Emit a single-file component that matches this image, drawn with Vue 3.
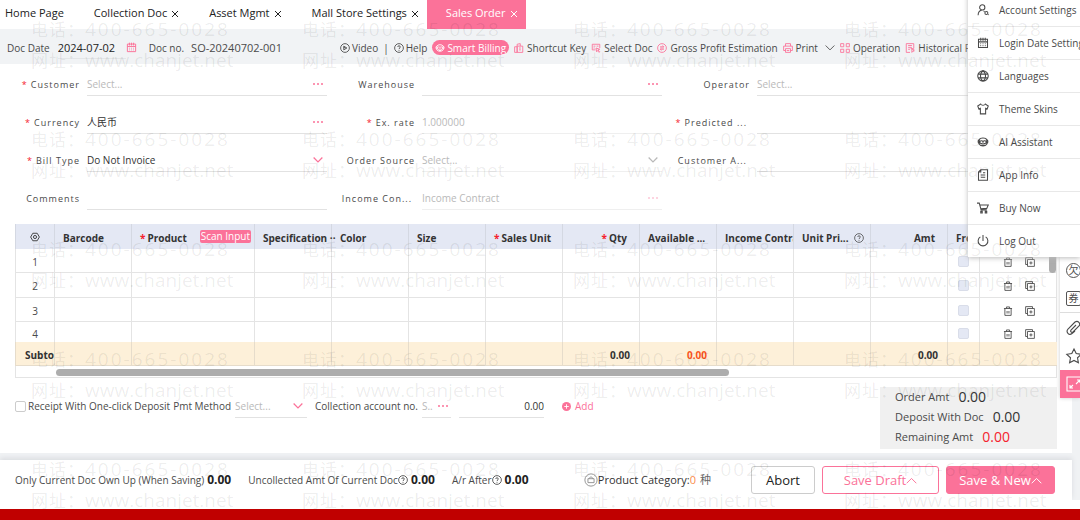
<script setup>
import { h, ref } from 'vue'

// 16x16 line icons, drawn with the current text colour
const icons = {
  calendar: 'M2 3h12v11H2zM2 6.5h12M5 1v4M8 1v4M11 1v4M4.5 9h1M7.5 9h1M10.5 9h1M4.5 11.5h1M7.5 11.5h1M10.5 11.5h1',
  play: 'M8 1a7 7 0 1 0 0 14A7 7 0 0 0 8 1zM6 5v6l5-3zM6 7l3 1',
  help: 'M8 1a7 7 0 1 0 0 14A7 7 0 0 0 8 1zM6 6.4c0-2.8 4-2.8 4 0C10 8 8 8 8 9.8M8 11.2v1.2',
  robot: 'M3 5c1-3 9-3 10 0M3 5c-2 0-2 5 0 5M13 5c2 0 2 5 0 5M3 5v6c2 3 8 3 10 0V5M4 7c1-1 3-1 4 .5C9 6 11 6 12 7v2c-1 2-3 1-4 0-1 1-3 2-4 0zM6 12h4',
  shortcut: 'M1 6h4v9H1zM5 15V2l5-1v4M5 5h9v10H5M8 8h3M8 11h3',
  pick: 'M14 8V2H2v9h5M4 5h3M4 8h2M9 5h3M8 8l6 2-3 1 3 3-1 1-3-3-1 2z',
  coin: 'M8 1a7 7 0 1 0 0 14A7 7 0 0 0 8 1zM5 6h6l-2-2M11 10H5l2 2M5 8h6',
  print: 'M4 5V1h8v4M4 12H1V5h14v7h-3M4 9h8v6H4zM6 12h4',
  grid: 'M1 1h5v5H1zM10 1h5v5h-5zM1 10h5v5H1zM10 10h5v5h-5z',
  history: 'M14 8V1H2v14h6M5 4h6M5 7h6M5 10h3M11 9v6l3-3zM9 9h5v5',
  chevron: 'M1 4l7 7 7-7',
  up: 'M1 12l7-7 7 7',
  user: 'M7 1a3.3 3.3 0 1 0 0 7 3.3 3.3 0 0 0 0-7zM1.500 15c0-4 2-6.500 5.500-7M12.500 10a2 2 0 1 0 0 4 2 2 0 0 0 0-4zM10 10.500l-1-.8M15 14l.7.6',
  globe: 'M8 1a7 7 0 1 0 0 14A7 7 0 0 0 8 1zM8 1c-4.500 3-4.500 11 0 14 4.500-3 4.500-11 0-14M1.500 5.500h13M1.500 10.500h13',
  shirt: 'M5 1.500c1 2 5 2 6 0l4 2.500-1.500 4-2-.8V14.500h-7V7.200l-2 .8L1 4z',
  paper: 'M5 1h9v14H2V4zM5 1v3H2M8 5h3M5 8h6M5 11h6',
  cart: 'M0 1.500h3l2.500 9H13M3.500 4H15l-2 4.500L5 9M5 12.500h2v2H5zM11 12.500h2v2h-2z',
  power: 'M8 0v8M4.500 2.500a6.500 6.500 0 1 0 7 0',
  gear: 'M4.500 2h7L15 8l-3.500 6h-7L1 8zM8 5.500a2.500 2.500 0 1 0 0 5 2.500 2.500 0 0 0 0-5z',
  trash: 'M1.500 4h13M5.500 4V1.500h5V4M3 4v11h10V4M6.500 8v4M9.500 8v4',
  copy: 'M4 4h11v11H4zM4 12H1V1h11v3M9.500 7v5M7 9.500h5',
  clip: 'M10 5L5 10c-1 1.500.5 3 2 2l6-6c2-2.500-1-6-4-4L2 9c-2.500 3 1 7 4 4.500L9 11',
  star: 'M8 1l2.200 4.600 5 .7-3.700 3.500.9 5L8 12.400l-4.400 2.400.9-5L.8 6.300l5-.7z',
  expand: 'M1 1h16v14H1zM11 4h3v3M14 4l-4 4M7 12H4V9M4 12l3-3',
  bag: 'M8 1a7 7 0 1 0 0 14A7 7 0 0 0 8 1zM4.500 6.500h7V11h-7zM6 6.500C6 4 10 4 10 6.500',
}

const Icon = (props) => h(
  'svg',
  { class: 'icon', viewBox: '0 0 16 16', 'aria-hidden': 'true' },
  [h('path', { d: icons[props.name] })],
)
Icon.props = ['name']

const tabs = [
  { name: 'Home Page' },
  { name: 'Collection Doc', closable: true },
  { name: 'Asset Mgmt', closable: true },
  { name: 'Mall Store Settings', closable: true },
  { name: 'Sales Order', closable: true, active: true },
]

const fields = [
  { id: 'customer', label: 'Customer', required: true, hint: 'Select...', end: 'dots' },
  { id: 'warehouse', label: 'Warehouse', end: 'dots' },
  { id: 'operator', label: 'Operator', hint: 'Select...' },
  { id: 'currency', label: 'Currency', required: true, value: '人民币', end: 'dots' },
  { id: 'rate', label: 'Ex. rate', required: true, hint: '1.000000', faint: true },
  { id: 'predicted', label: 'Predicted ...', required: true, cut: true },
  { id: 'bill', label: 'Bill Type', required: true, options: ['Do Not Invoice'], end: 'chevron' },
  { id: 'source', label: 'Order Source', options: ['Select...'], end: 'chevron', faint: true },
  { id: 'area', label: 'Customer A...', cut: true },
  { id: 'comments', label: 'Comments' },
  { id: 'contract', label: 'Income Con...', hint: 'Income Contract', end: 'dots', faint: true, cut: true },
]

const columns = [
  { key: 'barcode', label: 'Barcode' },
  { key: 'product', label: 'Product', required: true, scan: true },
  { key: 'spec', label: 'Specification ··', spill: true },
  { key: 'color', label: 'Color' },
  { key: 'size', label: 'Size' },
  { key: 'unit', label: 'Sales Unit', required: true },
  { key: 'qty', label: 'Qty', required: true, right: true, total: '0.00' },
  { key: 'available', label: 'Available ...', total: '0.00', warn: true },
  { key: 'income', label: 'Income Contract' },
  { key: 'price', label: 'Unit Pri...', help: true },
  { key: 'amt', label: 'Amt', right: true, total: '0.00' },
]

const menu = [
  { icon: 'user', label: 'Account Settings' },
  { icon: 'calendar', label: 'Login Date Settings' },
  { icon: 'globe', label: 'Languages' },
  { icon: 'shirt', label: 'Theme Skins' },
  { icon: 'robot', label: 'AI Assistant' },
  { icon: 'paper', label: 'App Info' },
  { icon: 'cart', label: 'Buy Now' },
  { icon: 'power', label: 'Log Out' },
]

const docDate = ref('2024-07-02')
const deposit = ref(false)
</script>

<template>
  <div class="app">
    <nav class="tabs">
      <button v-for="t in tabs" :key="t.name" class="tab" :class="{ 'tab--active': t.active }">
        {{ t.name }}
        <svg v-if="t.closable" class="close" viewBox="0 0 8 8"><path d="M1 1l6 6M7 1l-6 6" /></svg>
      </button>
    </nav>

    <header class="toolbar">
      <div class="doc">
        <label for="date">Doc Date</label>
        <input id="date" v-model="docDate" class="date">
        <Icon name="calendar" class="pink doc-cal" />
        <span>Doc no.</span>
        <span class="doc-no">SO-20240702-001</span>
      </div>
      <div class="actions">
        <button><Icon name="play" />Video</button>
        <span>|</span>
        <button><Icon name="help" />Help</button>
        <button class="smart"><Icon name="robot" />Smart Billing</button>
        <button><Icon name="shortcut" class="pink" />Shortcut Key</button>
        <button><Icon name="pick" class="pink" />Select Doc</button>
        <button><Icon name="coin" class="pink" />Gross Profit Estimation</button>
        <button><Icon name="print" class="pink" />Print<Icon name="chevron" class="print-more" /></button>
        <button><Icon name="grid" class="pink" />Operation</button>
        <button><Icon name="history" class="pink" />Historical Foot</button>
      </div>
    </header>

    <main class="main">
      <form class="form" @submit.prevent>
        <div v-for="f in fields" :key="f.id" class="field" :class="{ 'field--faint': f.faint }">
          <label :for="f.id" :class="{ cut: f.cut }"><i v-if="f.required" class="req">*</i>{{ f.label }}</label>
          <div class="box">
            <select v-if="f.options" :id="f.id">
              <option v-for="o in f.options" :key="o">{{ o }}</option>
            </select>
            <input v-else :id="f.id" :value="f.value" :placeholder="f.hint">
            <button v-if="f.end === 'dots'" type="button" class="dots" :aria-label="`Choose ${f.label}`"><i /><i /><i /></button>
            <Icon v-if="f.end === 'chevron'" name="chevron" class="arrow" />
          </div>
        </div>
      </form>

      <div class="sheet">
        <table class="lines">
          <colgroup>
            <col class="w-no">
            <col v-for="c in columns" :key="c.key" :class="c.scan ? 'w-product' : 'w-cell'">
            <col class="w-free">
            <col class="w-ops">
          </colgroup>
          <thead>
            <tr>
              <th class="center"><Icon name="gear" /></th>
              <th v-for="c in columns" :key="c.key" :class="{ right: c.right, spill: c.spill }">
                <div class="head">
                  <i v-if="c.required" class="req">*</i><span>{{ c.label }}</span>
                  <button v-if="c.scan" class="scan">Scan Input</button>
                  <Icon v-if="c.help" name="help" class="head-help" />
                </div>
              </th>
              <th>Free</th>
              <th />
            </tr>
          </thead>
          <tbody>
            <tr v-for="n in 4" :key="n">
              <td class="center">{{ n }}</td>
              <td v-for="c in columns" :key="c.key" />
              <td class="center"><input type="checkbox" class="tick tick--off" :aria-label="`Free gift, line ${n}`" disabled></td>
              <td>
                <div class="ops-row">
                  <button aria-label="Delete line"><Icon name="trash" /></button>
                  <button aria-label="Copy line"><Icon name="copy" /></button>
                </div>
              </td>
            </tr>
          </tbody>
          <tfoot>
            <tr>
              <td class="subtotal">Subtotal</td>
              <td v-for="c in columns" :key="c.key" class="sum" :class="{ warn: c.warn }">{{ c.total }}</td>
              <td />
              <td />
            </tr>
          </tfoot>
        </table>
        <div class="scroll-x"><div class="thumb" /></div>
        <div class="thumb-y" />
      </div>

      <div class="below">
        <div class="deposit">
          <label class="one-click"><input v-model="deposit" type="checkbox" class="tick">Receipt With One-click Deposit</label>
          <label for="pmt" class="pmt">Pmt Method</label>
          <div class="box pmt-box">
            <select id="pmt" class="hint"><option>Select...</option></select>
            <Icon name="chevron" class="arrow" />
          </div>
          <label for="account" class="account">Collection account no.</label>
          <div class="box account-box">
            <input id="account" placeholder="S..">
            <button class="dots" aria-label="Choose account"><i /><i /><i /></button>
          </div>
          <div class="box amount-box"><input value="0.00" aria-label="Deposit amount"></div>
          <button class="add">
            <svg class="add-icon" viewBox="0 0 10 10"><circle cx="5" cy="5" r="5" /><path d="M5 2.500v5M2.500 5h5" /></svg>Add
          </button>
        </div>
        <div class="summary">
          <p>Order Amt<b>0.00</b></p>
          <p>Deposit With Doc<b>0.00</b></p>
          <p>Remaining Amt<b class="red">0.00</b></p>
        </div>
      </div>
    </main>

    <footer class="footer">
      <div class="stat">Only Current Doc Own Up (When Saving)<b>0.00</b></div>
      <div class="stat">Uncollected Amt Of Current Doc<Icon name="help" /><b>0.00</b></div>
      <div class="stat">A/r After<Icon name="help" /><b>0.00</b></div>
      <div class="category"><Icon name="bag" class="bag" />Product Category:<em>0</em><span>种</span></div>
      <div class="buttons">
        <button class="btn">Abort</button>
        <button class="btn btn--line">Save Draft<Icon name="up" /></button>
        <button class="btn btn--fill">Save &amp; New<Icon name="up" /></button>
      </div>
    </footer>
    <div class="strip" />

    <aside class="rail">
      <button aria-label="Arrears"><span class="glyph glyph--round">欠</span></button>
      <button aria-label="Coupons"><span class="glyph">券</span></button>
      <button aria-label="Attachments" class="rail-split"><Icon name="clip" /></button>
      <button aria-label="Favourites"><Icon name="star" /></button>
      <button aria-label="Full screen" class="rail-full"><Icon name="expand" /></button>
    </aside>

    <div class="menu">
      <button v-for="m in menu" :key="m.label"><Icon :name="m.icon" />{{ m.label }}</button>
    </div>

    <div class="watermark" aria-hidden="true">
      <div v-for="n in 20" :key="n">
        <div class="mark-tel"><span>电话：</span>400-665-0028</div>
        <div><span>网址：</span>www.chanjet.net</div>
      </div>
    </div>
  </div>
</template>

<style>
body {
  margin: 0;
  background: #fff;
}
</style>

<style scoped>
.app {
  position: relative;
  overflow: hidden;
  background: #f0f2f4;
  color: #4a4a4a;
  font: 10px/16px "Open Sans", "Noto Sans CJK SC", sans-serif;
}
.app * {
  box-sizing: border-box;
}
button,
input,
select {
  margin: 0;
  padding: 0;
  border: none;
  border-radius: 0;
  background: none;
  color: inherit;
  font: inherit;
  outline: none;
  appearance: none;
}
input,
select {
  min-width: 0;
}
button {
  white-space: nowrap;
}
.icon {
  width: 11px;
  height: 11px;
  flex: none;
  fill: none;
  stroke: currentColor;
  stroke-width: 1.4;
  overflow: visible;
}
.pink {
  color: #fb7299;
}
.req {
  color: #f5222d;
  font-style: normal;
}

/* tabs */
.tabs {
  display: flex;
  height: 29px;
  padding-left: 5px;
  gap: 30px;
  background: #fff;
  color: #222;
  font-size: 11px;
}
.tab {
  display: flex;
  align-items: center;
  gap: 4px;
  padding-bottom: 3px;
}
.tab--active {
  margin-left: -22px;
  padding: 0 8px 3px 19px;
  background: #fb7299;
  color: #fff;
}
.close {
  width: 8px;
  height: 8px;
  margin-top: 2px;
  fill: none;
  stroke: currentColor;
}

/* toolbar */
.toolbar {
  display: flex;
  align-items: center;
  height: 35px;
  padding: 2px 0 0 7px;
  background: #f1f3f5;
  white-space: nowrap;
}
.doc {
  display: flex;
  flex: none;
  align-items: center;
  width: 333px;
}
.date {
  width: 68px;
  height: 22px;
  margin-left: 8px;
  border-bottom: 1px solid #e4e6e8;
  color: #222;
  font-size: 11px;
}
.doc-cal {
  margin-right: 12px;
}
.doc-no {
  margin-left: 7px;
  font-size: 11px;
}
.actions {
  display: flex;
  align-items: center;
  gap: 5px;
}
.actions button {
  display: flex;
  align-items: center;
  gap: 2px;
}
.actions .smart {
  height: 15px;
  padding: 0 3px;
  border-radius: 8px;
  background: #fb7299;
  color: #fff;
}
.actions .smart ~ button {
  gap: 3px;
}
.actions .icon {
  width: 10px;
  height: 10px;
}
.actions .print-more {
  margin-left: 4px;
}

/* form */
.main {
  margin: 0 8px 7px 0;
  background: #fff;
}
.form {
  display: grid;
  grid-template-columns: repeat(3, 31.250%);
  row-gap: 14px;
  padding: 8px 0 14px;
}
.field {
  display: grid;
  grid-template-columns: 80px 1fr;
  column-gap: 7px;
  padding-right: 8px;
}
.field label {
  padding-top: 5px;
  font-size: 9px;
  text-align: right;
  letter-spacing: 1px;
  white-space: nowrap;
}
.field .cut {
  padding-right: 3px;
}
.field .req {
  margin-right: 3px;
}
.box {
  display: flex;
  align-items: center;
  height: 24px;
  border-bottom: 1px solid #e2e2e2;
  color: #333;
}
.box input,
.box select {
  flex: 1;
  height: 20px;
}
.box input::placeholder {
  color: #b9b9b9;
  opacity: 1;
}
.field--faint .box {
  border-color: #efefef;
}
.box .hint,
.field--faint select,
.field--faint .arrow {
  color: #b9b9b9;
}
.dots {
  display: flex;
  gap: 2px;
  margin-right: 4px;
}
.dots i {
  width: 2px;
  height: 2px;
  border-radius: 1px;
  background: #fb7299;
}
.field--faint .dots {
  opacity: 0.4;
}
.arrow {
  width: 10px;
  height: 10px;
  margin-right: 4px;
  color: #fb7299;
  stroke-width: 2;
}

/* order lines */
.sheet {
  position: relative;
  margin: 0 15px;
  border: solid #e4e4e4;
  border-width: 0 1px 1px 0;
}
.lines {
  width: 100%;
  border-collapse: separate;
  border-spacing: 0;
  table-layout: fixed;
}
.w-no { width: 39px; }
.w-cell { width: 77px; }
.w-product { width: 123px; }
.w-free { width: 32px; }
.w-ops { width: 78px; }
.lines th,
.lines td {
  height: 24px;
  padding: 0;
  border: solid #e4e4e4;
  border-width: 0 0 1px 1px;
  white-space: nowrap;
  overflow: hidden;
}
.lines th {
  height: 25px;
  padding: 2px 0 0 8px;
  border-color: #d4d8e2;
  border-bottom: none;
  background: #e4e8f4;
  color: #333;
  font-weight: 700;
  text-align: left;
}
.lines .spill {
  overflow: visible;
}
.lines .center {
  padding-left: 0;
  text-align: center;
  line-height: 10px;
}
.lines .icon {
  width: 10px;
  height: 10px;
}
.head {
  display: flex;
  align-items: center;
  gap: 2px;
}
.right .head {
  justify-content: flex-end;
  padding-right: 12px;
}
.scan {
  height: 13px;
  margin: 0 3px 3px auto;
  padding: 0 1px;
  border-radius: 2px;
  background: #fb7299;
  color: #fff;
  font-weight: 400;
  line-height: 12px;
}
.lines .head-help {
  margin-left: 3px;
  stroke-width: 1.1;
}
.lines tbody td {
  padding-top: 2px;
}
.lines tbody tr:nth-child(2) td {
  height: 25px;
}
.lines tbody tr:last-child td {
  height: 20px;
  padding-top: 4px;
  border-bottom: none;
}
.lines tfoot td {
  padding-top: 2px;
  border-color: #e6dccb;
  background: #fdf0d9;
  color: #333;
  font-weight: 700;
}
.lines .subtotal {
  padding-left: 9px;
}
.lines .sum {
  padding-right: 9px;
  text-align: right;
}
.lines .warn {
  color: #fa541c;
}
.tick {
  width: 11px;
  height: 11px;
  border: 1px solid #ccc;
  border-radius: 2px;
  background: #fff;
}
.tick:checked {
  background: #fb7299;
}
.tick--off {
  border-color: #d9dde9;
  background: #e4e8f4;
}
.ops-row {
  display: flex;
  justify-content: center;
  gap: 12px;
}
.ops-row button {
  height: 10px;
  line-height: 10px;
}
.scroll-x {
  height: 11px;
  padding: 3px 0 0 40px;
  border-left: 1px solid #e4e4e4;
}
.thumb {
  width: 67.300%;
  height: 7px;
  border-radius: 4px;
  background: #adadad;
}
.thumb-y {
  position: absolute;
  top: 24px;
  right: 0;
  width: 7px;
  height: 25px;
  border-radius: 4px;
  background: #adadad;
}

/* deposit and totals */
.below {
  display: flex;
  align-items: flex-start;
  justify-content: space-between;
  padding: 9px 15px 4px;
  white-space: nowrap;
}
.deposit {
  display: flex;
  align-items: center;
  padding-top: 7px;
}
.one-click {
  display: flex;
  align-items: center;
  gap: 2px;
}
.pmt {
  margin: 0 4px 0 3px;
}
.pmt-box {
  width: 72px;
}
.account {
  margin: 0 4px 0 8px;
}
.account-box {
  width: 29px;
}
.account-box input {
  width: 14px;
}
.account-box .dots {
  margin-right: 3px;
}
.amount-box {
  width: 85px;
  margin: 0 18px 0 8px;
}
.amount-box input {
  text-align: right;
}
.add {
  display: flex;
  align-items: center;
  gap: 4px;
  color: #fb7299;
}
.add-icon {
  width: 9px;
  height: 9px;
  fill: #fb7299;
}
.add-icon path {
  stroke: #fff;
}
.summary {
  width: 177px;
  padding: 0 15px 2px;
  background: #f0f0f0;
  font-size: 11px;
}
.summary p {
  display: flex;
  align-items: center;
  gap: 9px;
  height: 20px;
  margin: 0;
}
.summary b {
  color: #333;
  font-size: 14px;
  font-weight: 400;
}
.summary .red {
  color: #f5222d;
}

/* footer */
.footer {
  display: flex;
  align-items: center;
  height: 40px;
  margin-right: 8px;
  padding: 0 17px 0 15px;
  background: #fff;
  box-shadow: 0 -2px 5px #dadce0;
  white-space: nowrap;
}
.stat {
  display: flex;
  align-items: center;
  margin-right: 17px;
}
.stat b {
  margin-left: 3px;
  color: #222;
  font-size: 12px;
}
.stat .icon {
  width: 10px;
  height: 10px;
}
.category {
  display: flex;
  align-items: center;
  margin-left: auto;
  margin-right: 40px;
  color: #333;
  font-size: 11px;
}
.category em {
  margin-right: 4px;
  color: #fa8c4c;
  font-style: normal;
}
.category .bag {
  width: 14px;
  height: 14px;
  stroke-width: 1;
  color: #888;
}
.category span {
  color: #666;
}
.buttons {
  display: flex;
  gap: 7px;
}
.btn {
  display: flex;
  align-items: center;
  justify-content: center;
  height: 28px;
  min-width: 64px;
  border: 1px solid #ccc;
  border-radius: 3px;
  color: #222;
  font-size: 13px;
}
.btn--line {
  width: 117px;
  border-color: #fb7299;
  color: #fb7299;
}
.btn--fill {
  width: 109px;
  border-color: #fb7299;
  background: #fb7299;
  color: #fff;
}
.strip {
  height: 20px;
  border-top: 9px solid #fff;
  background: #c00000;
}

/* overlays */
.rail {
  position: absolute;
  top: 256px;
  right: 0;
  width: 20px;
  background: #fff;
  box-shadow: 0 0 4px #ccc;
}
.rail button {
  display: flex;
  align-items: center;
  width: 20px;
  height: 28px;
  padding-left: 6px;
  overflow: hidden;
}
.rail .icon {
  width: 16px;
  height: 16px;
  stroke-width: 1.1;
}
.rail .rail-split {
  height: 30px;
  border-top: 1px solid #ddd;
}
.rail .rail-full {
  background: #fb7299;
  color: #fff;
}
.glyph {
  flex: none;
  width: 15px;
  height: 15px;
  border: 1px solid #555;
  border-radius: 2px;
  font-size: 10px;
  line-height: 12px;
  text-align: center;
}
.glyph--round {
  border-radius: 50%;
}
.menu {
  position: absolute;
  top: -6px;
  right: 0;
  width: 112px;
  background: #fff;
  box-shadow: 0 1px 5px #bbb;
}
.menu button {
  display: flex;
  align-items: center;
  gap: 10px;
  width: 100%;
  height: 33px;
  padding-left: 9px;
  border-bottom: 1px solid #e8e8e8;
  overflow: hidden;
}
.menu button:last-child {
  height: 32px;
  border-bottom: none;
}
.menu .icon {
  width: 12px;
  height: 12px;
}
.watermark {
  position: absolute;
  inset: 0 0 11px;
  display: grid;
  grid-template-columns: repeat(4, 271px);
  grid-auto-rows: 110px;
  padding: 14px 0 0 31px;
  overflow: hidden;
  color: rgba(0, 0, 0, 0.08);
  font-size: 19px;
  line-height: 30px;
  white-space: nowrap;
  pointer-events: none;
}
.watermark span {
  font-size: 17px;
  letter-spacing: 1px;
}
.mark-tel {
  letter-spacing: 2px;
}
</style>
